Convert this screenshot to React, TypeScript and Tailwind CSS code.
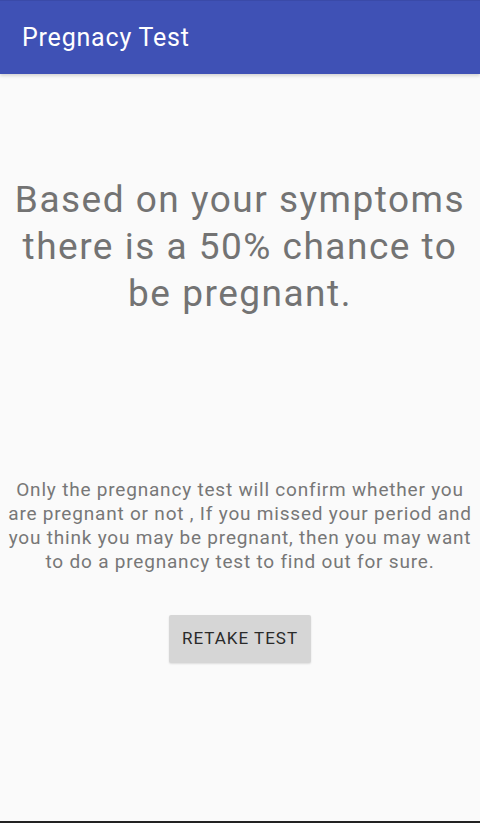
export default function App() {
  return (
    <div className="flex h-[823px] w-[480px] flex-col bg-[#fafafa] font-['Roboto',sans-serif]">
      <header className="flex h-[74px] shrink-0 items-center border-t border-[#3a4aa8] bg-[#3f51b5] px-[22px] shadow-[0_2px_3px_rgba(0,0,0,0.15)]">
        <h1 className="text-[25px] tracking-[0.8px] text-white">Pregnacy Test</h1>
      </header>

      <main className="flex flex-1 flex-col items-center">
        <p className="mt-[102px] text-center text-[37px] leading-[47px] tracking-[1.5px] text-[#737373]">
          <span className="block">Based on your symptoms</span>
          <span className="block">there is a 50% chance to</span>
          <span className="block">be pregnant.</span>
        </p>

        <p className="mt-[161px] whitespace-nowrap text-center text-[19px] leading-[24px] tracking-[0.8px] text-[#777777]">
          <span className="block">Only the pregnancy test will confirm whether you</span>
          <span className="block">are pregnant or not , If you missed your period and</span>
          <span className="block">you think you may be pregnant, then you may want</span>
          <span className="block">to do a pregnancy test to find out for sure.</span>
        </p>

        <button className="mt-[41px] h-[48px] w-[142px] rounded-[2px] bg-[#d6d6d6] text-[17px] tracking-[1px] text-[#2a2a2a] shadow-[0_1px_2px_rgba(0,0,0,0.12)]">
          RETAKE TEST
        </button>
      </main>

      <div className="h-[2px] shrink-0 bg-[#222222]" />
    </div>
  );
}
